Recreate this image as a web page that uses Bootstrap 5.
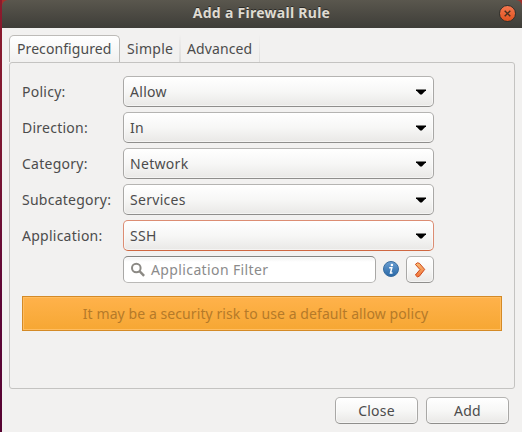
<!DOCTYPE html>
<html lang="en">
<head>
<meta charset="utf-8">
<title>Add a Firewall Rule</title>
<link href="https://cdn.jsdelivr.net/npm/bootstrap@5.3.0/dist/css/bootstrap.min.css" rel="stylesheet">
<style>
body{font-family:"Noto Sans","Open Sans",sans-serif;font-size:14px;line-height:20px;color:#4c4c4c;background:#f2f1f0;height:432px;overflow:hidden}
.desktop-edge{width:2px;background:linear-gradient(#8c1b2c,#7c1632 35%,#5e0536 70%,#560332)}
.desktop-corner{background:#a3302c}
.titlebar{height:28px;background:linear-gradient(#5a574e,#3e3d38);border-radius:6px 6px 0 0;color:#dfdbd2;padding-right:6px}
.titlebar h1{font-size:14px;line-height:20px;font-weight:700;margin:0 0 2px 22px;text-shadow:0 -1px #2c2b27;letter-spacing:.28px}
.close-dot{width:17px;height:17px;margin-bottom:2px;border-radius:50%;background:linear-gradient(#f4774f,#e2531f);border:1px solid #33312c}
.rule-tabs{margin:7px 7px 0;height:27px;border:0}
.rule-tabs .nav-link{color:#4c4c4c;height:27px;margin:0;border:0;border-right:2px solid;border-image:linear-gradient(#f2f1f000,#dcdbda) 1;padding:4px 0 0 7px;border-radius:0;text-align:left;white-space:nowrap}
.rule-tabs .nav-link.active{color:#4c4c4c;width:111px;border:1px solid #bdbbb8;border-bottom:0;border-image:none;border-radius:5px 5px 0 0;background:linear-gradient(#fff,#f2f1f0);padding:3px 0 0 7px;letter-spacing:.08px}
.rule-tabs .tab-simple{width:61px;letter-spacing:.3px}
.rule-tabs .tab-advanced{width:79px;padding-left:6px;border-right-width:1px;letter-spacing:.1px}
.rule-panel{margin:0 7px;height:327px;border:1px solid #c4c3c1;border-radius:3px;padding:13px 12px 0}
.field-label{width:101px;letter-spacing:.25px}
.gtk{height:31px;border:1px solid;border-color:#b5b4b2 #a9a8a6 #8f8e8c;border-radius:5px;background:linear-gradient(#fff,#f7f7f6 50%,#e9e8e6);color:#4c4c4c;font-size:14px;line-height:20px;box-shadow:inset 0 0 0 1px #ffffff80}
.combo{width:311px;padding:1px 7px 0 6px;letter-spacing:.3px}
.combo.focused{border-color:#dc8d73 #dc8d73 #cf6741}
.search{height:27px;width:253px;background:linear-gradient(#f1f1f1,#fff 5px);border-color:#858482 #a9a8a6 #bab9b7;color:#8b8b8b;padding:0 6px;letter-spacing:.38px}
.search-hint{margin-left:5px}
.info-icon{margin:0 7px}
.small-btn{width:28px;height:27px}
.wide-btn{width:83px;height:27px;padding:0;letter-spacing:.2px}
.warn{margin-top:13px;height:35px;width:480px;border:1px solid #d48a26;background:linear-gradient(#ffb24b,#f6a733);color:#b57a29;box-shadow:inset 0 0 0 1px #ffbd60;padding-right:13px;letter-spacing:.08px}
.actions{padding:8px 13px 0 0;gap:8px}
</style>
<script src="https://cdn.jsdelivr.net/npm/bootstrap@5.3.0/dist/js/bootstrap.bundle.min.js"></script>
</head>
<body>
<svg class="d-none"><symbol id="caret" viewBox="0 0 10 6"><path d="M0 .5h10v.8L5.8 5.5H4.2L0 1.3z"/></symbol></svg>
<div class="d-flex h-100">
<div class="desktop-edge flex-shrink-0"></div>
<main class="flex-grow-1">
<div class="desktop-corner"><header class="titlebar d-flex align-items-center">
<h1 class="flex-grow-1 text-center">Add a Firewall Rule</h1>
<button class="close-dot p-0 d-flex align-items-center justify-content-center" aria-label="Close window"><svg width="7" height="7" viewBox="0 0 7 7"><path d="M.7.7l5.6 5.6M6.3.7L.7 6.3" stroke="#46301f" stroke-width="1.4"/></svg></button>
</header></div>
<nav class="nav nav-tabs rule-tabs flex-nowrap">
<a class="nav-link active">Preconfigured</a>
<a class="nav-link tab-simple">Simple</a>
<a class="nav-link tab-advanced">Advanced</a>
</nav>
<section class="rule-panel">
<div class="d-flex flex-column" style="gap:5px">
<div class="d-flex align-items-center"><span class="field-label">Policy:</span><button class="gtk combo d-flex align-items-center justify-content-between"><span>Allow</span><svg width="10" height="6"><use href="#caret"/></svg></button></div>
<div class="d-flex align-items-center"><span class="field-label">Direction:</span><button class="gtk combo d-flex align-items-center justify-content-between"><span>In</span><svg width="10" height="6"><use href="#caret"/></svg></button></div>
<div class="d-flex align-items-center"><span class="field-label">Category:</span><button class="gtk combo d-flex align-items-center justify-content-between"><span>Network</span><svg width="10" height="6"><use href="#caret"/></svg></button></div>
<div class="d-flex align-items-center"><span class="field-label">Subcategory:</span><button class="gtk combo d-flex align-items-center justify-content-between"><span>Services</span><svg width="10" height="6"><use href="#caret"/></svg></button></div>
<div class="d-flex align-items-center"><span class="field-label">Application:</span><button class="gtk combo focused d-flex align-items-center justify-content-between"><span>SSH</span><svg width="10" height="6"><use href="#caret"/></svg></button></div>
<div class="d-flex align-items-center"><span class="field-label"></span>
<div class="gtk search d-flex align-items-center"><svg width="16" height="16" viewBox="0 0 16 16" fill="none" stroke="#8b8984"><circle cx="6.3" cy="6" r="4.3" stroke-width="2"/><path d="M9.5 9.2l4.6 4.6" stroke-width="2.4"/></svg><span class="search-hint">Application Filter</span></div>
<svg class="info-icon" width="16" height="17" viewBox="0 0 16 17"><defs><linearGradient id="blue" x2="0" y2="1"><stop stop-color="#6b9fd2"/><stop offset="1" stop-color="#2867a6"/></linearGradient></defs><circle cx="8" cy="8" r="7.5" fill="url(#blue)" stroke="#3a6d9f"/><circle cx="8.9" cy="4" r="1.3" fill="#fff"/><path d="M6.2 6.8h2.6L7.5 12h2" fill="none" stroke="#fff" stroke-width="1.5"/></svg>
<button class="gtk small-btn p-0 d-flex align-items-center justify-content-center" aria-label="Open"><svg width="12" height="16" viewBox="0 0 12 16"><defs><linearGradient id="orange" x2="0" y2="1"><stop stop-color="#f9bd75"/><stop offset="1" stop-color="#f0733a"/></linearGradient></defs><path d="M1.4 2.4L3.4.8l2 .5 5.3 6.1-5.3 6.8-2 .7-2-1.9L6 7.6z" fill="url(#orange)" stroke="#cf4a1c"/></svg></button></div>
</div>
<div class="warn d-flex align-items-center justify-content-center"><span>It may be a security risk to use a default allow policy</span></div>
</section>
<footer class="actions d-flex justify-content-end"><button class="gtk wide-btn">Close</button><button class="gtk wide-btn">Add</button></footer>
</main>
</div>
</body>
</html>
